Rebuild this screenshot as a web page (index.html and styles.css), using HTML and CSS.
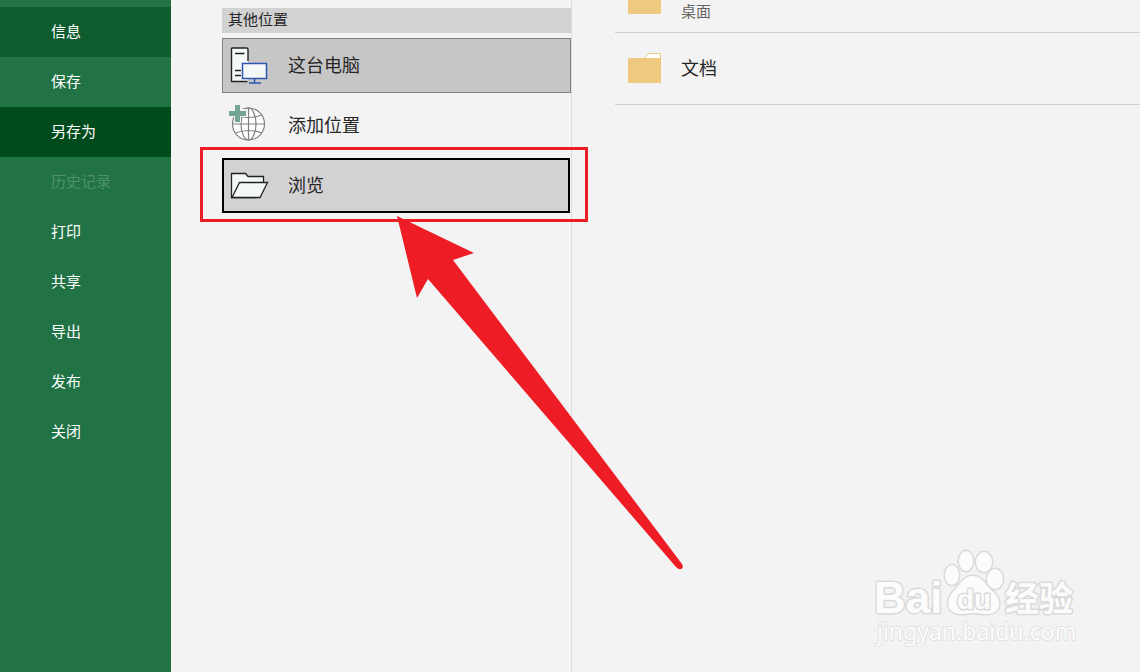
FILE: index.html
```html
<!DOCTYPE html>
<html lang="zh-CN">
<head>
  <meta charset="UTF-8">
  <title>另存为</title>
  <link rel="stylesheet" href="styles.css">
</head>
<body>
  <nav class="sidebar">
    <button type="button" class="hover">信息</button>
    <button type="button">保存</button>
    <button type="button" class="active">另存为</button>
    <button type="button" disabled>历史记录</button>
    <button type="button">打印</button>
    <button type="button">共享</button>
    <button type="button">导出</button>
    <button type="button">发布</button>
    <button type="button">关闭</button>
  </nav>

  <section class="places">
    <h2>其他位置</h2>

    <button type="button" class="place selected">
      <svg width="38" height="38" viewBox="0 0 38 38">
        <path d="M18 15V3L17 2H2L1.500 3V35.500H17.500" fill="#f4f9f8"/>
        <path d="M18 15V3L17 2H2L1.500 3V35.500H17.500M5 7.500H14.500M5 24.500H11M5 29.500H11" fill="none" stroke="#222" stroke-width="1.400"/>
        <rect x="12.500" y="17.500" width="24" height="15" fill="#f4f9f8" stroke="#2f56b0" stroke-width="1.500"/>
        <path d="M24.500 33V36.500M19 37H31" fill="none" stroke="#2f56b0" stroke-width="1.500"/>
      </svg>
      <span>这台电脑</span>
    </button>

    <button type="button" class="place">
      <svg width="38" height="38" viewBox="0 0 38 38">
        <g fill="none" stroke="#808080" stroke-width="1.200">
          <circle cx="18.500" cy="18" r="16" fill="#fff"/>
          <ellipse cx="18.500" cy="18" rx="7.500" ry="16"/>
          <path d="M2.500 18H34.500M18.500 2V34M5.500 9Q18.500 14 31.500 9M5.500 27Q18.500 22 31.500 27"/>
        </g>
        <path d="M-1 3H4V-2H11V3H17V11H11V17H4V11H-1Z" fill="#f3f3f3"/>
        <path d="M-1 5H5V-1H10V5H16V10H10V16H5V10H-1Z" fill="#74a593"/>
      </svg>
      <span>添加位置</span>
    </button>

    <div class="marked">
      <button type="button" class="place focus">
        <svg width="38" height="38" viewBox="0 0 38 38">
          <g fill="#f4f9f8" stroke="#222" stroke-width="1.300" stroke-linejoin="miter">
            <path d="M1.500 31.500V7.500H15.500L18 10.500H33.500V16.500L26 31.500Z"/>
            <path d="M9.500 16.500H37.500L30 31.500H2Z"/>
          </g>
        </svg>
        <span>浏览</span>
      </button>
      <svg class="arrow" width="290" height="360" viewBox="0 0 290 360">
        <path d="M1 1L78 38L57 45L286 349Q288 353 285 354Q283 355 280 352L32 64L21 83Z" fill="#ee1c25"/>
      </svg>
    </div>
  </section>

  <main class="folders">
    <a href="#" class="folder scrolled">
      <svg width="33" height="31" viewBox="0 0 33 31">
        <path d="M0 17L1 15H17L21 1H33V31H0Z" fill="#efc97f"/>
      </svg>
      <span class="path">桌面</span>
    </a>
    <a href="#" class="folder">
      <svg width="33" height="31" viewBox="0 0 33 31">
        <path d="M16.500 6L21 1.500H32.500V6" fill="#fff" stroke="#efc97f"/>
        <path d="M0 7L1 6H33V31H0Z" fill="#efc97f"/>
      </svg>
      <span>文档</span>
    </a>
  </main>

  <svg class="watermark" width="220" height="110" viewBox="0 0 220 110">
    <g>
      <ellipse cx="91" cy="35" rx="7" ry="10"/>
      <ellipse cx="105" cy="21" rx="7" ry="10"/>
      <ellipse cx="123" cy="22" rx="8" ry="10"/>
      <ellipse cx="134" cy="39" rx="8" ry="10"/>
      <path d="M112 36C122 36 124 45 132 52C142 60 140 74 126 74C119 74 117 73 113 73C108 73 105 74 100 74C86 74 84 61 92 52C100 44 102 36 112 36Z"/>
    </g>
    <text class="wm-logo" x="13" y="73">Bai</text>
    <text class="wm-du" x="96" y="69">du</text>
    <text class="wm-cn" x="144" y="71">经验</text>
    <text class="wm-url" x="16" y="100">jingyan.baidu.com</text>
  </svg>
</body>
</html>
```
FILE: styles.css
```css
* { box-sizing: border-box; }

body {
  display: flex;
  position: relative;
  margin: 0;
  min-height: 100vh;
  overflow: hidden;
  font-family: "Noto Sans CJK SC", sans-serif;
  font-size: 15px;
  color: #262626;
  background: #f3f3f3;
}

button {
  margin: 0;
  border: 0;
  font: inherit;
  color: inherit;
  text-align: left;
  background: none;
  cursor: pointer;
}

/* 左侧菜单 */
.sidebar {
  display: flex;
  flex-direction: column;
  flex: none;
  width: 171px;
  padding-top: 7px;
  color: #fff;
  background: #217346;
}
  .sidebar button {
    height: 50px;
    padding: 0 0 4px 51px;
  }
  .sidebar .hover { background: #0f5c2f; }
  .sidebar .active { background: #004b1c; }
  .sidebar button:disabled { color: #4f9069; }

/* 保存位置 */
.places {
  display: flex;
  flex-direction: column;
  flex: none;
  gap: 5px;
  width: 401px;
  padding: 8px 0 0 51px;
  border-right: 1px solid #dedede;
}
  .places h2 {
    margin: 0;
    padding: 0 0 3px 6px;
    font-size: 15px;
    font-weight: normal;
    line-height: 22px;
    background: #d2d2d2;
  }
  .place {
    display: flex;
    align-items: center;
    gap: 20px;
    width: 100%;
    height: 55px;
    padding: 0 7px 2px;
    border: 1px solid transparent;
    font-size: 18px;
  }
  .place svg { overflow: visible; }
  .place span,
  .folder span { padding-bottom: 2px; }
  .place.selected {
    border-color: #808080;
    background: #c6c6c6;
  }
  .place.focus {
    padding: 0 6px 2px;
    border: 2px solid #000;
    background: #d2d2d2;
  }

/* 红框和箭头 */
.marked {
  position: relative;
  margin-right: 1px;
}
  .marked::after {
    content: "";
    position: absolute;
    inset: -11px -18px -9px -22px;
    border: 3px solid #ee1c25;
    pointer-events: none;
  }
  .arrow {
    position: absolute;
    left: 174px;
    top: 57px;
    pointer-events: none;
  }

/* 文件夹列表 */
.folders {
  flex: 1;
  margin-top: -39px;
  padding-left: 43px;
}
  .folder {
    display: flex;
    align-items: center;
    gap: 20px;
    height: 72px;
    padding: 0 0 2px 13px;
    border-bottom: 1px solid #d2d2d2;
    font-size: 18px;
    color: inherit;
    text-decoration: none;
  }
  .folder.scrolled { align-items: flex-end; }
  .scrolled svg { margin-bottom: 16px; }
  .scrolled .path {
    margin-bottom: 7px;
    font-size: 15px;
    line-height: 20px;
    color: #666;
  }

/* 水印 */
.watermark {
  position: absolute;
  right: 59px;
  bottom: 22px;
  overflow: visible;
  fill: #fcfcfc;
  stroke: #dadada;
  stroke-width: 3px;
  stroke-linejoin: round;
  paint-order: stroke;
  pointer-events: none;
}
  .wm-logo {
    font: bold 44px "Liberation Sans", sans-serif;
  }
  .wm-du {
    font: bold 28px "Liberation Sans", sans-serif;
  }
  .wm-cn {
    font: bold 34px "Noto Sans CJK SC", sans-serif;
  }
  .wm-url {
    font: 23px "Noto Sans", sans-serif;
    stroke: #e2e2e2;
    stroke-width: 2px;
  }
```
